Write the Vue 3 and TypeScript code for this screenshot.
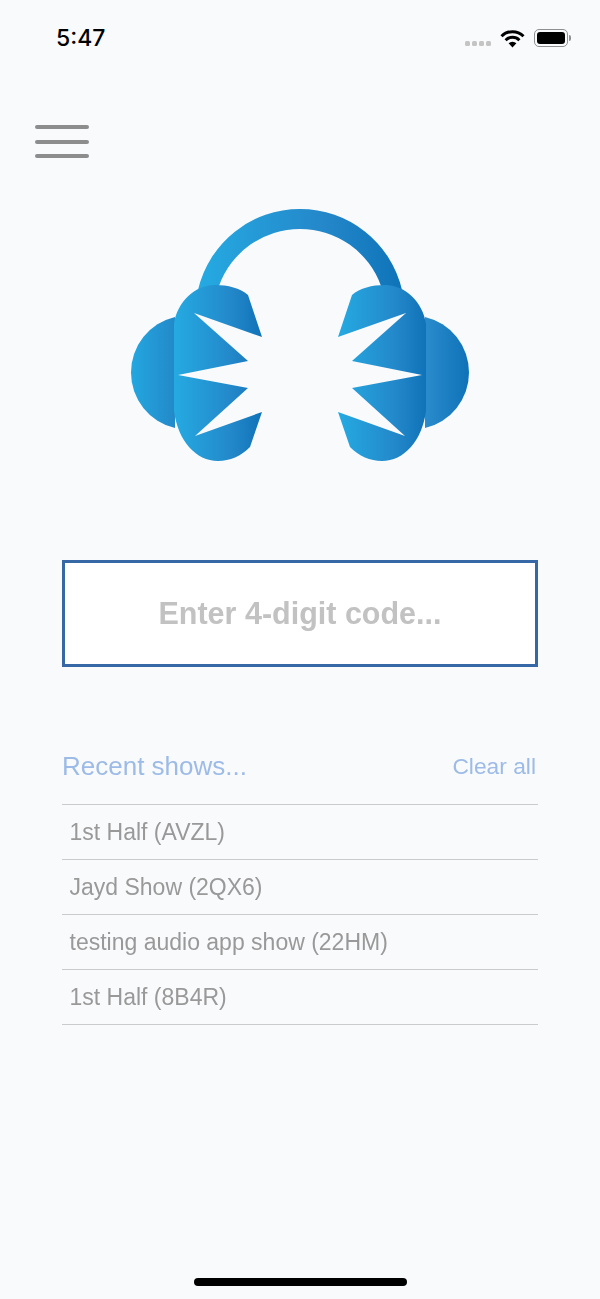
<script setup lang="ts">
const shows: string[] = [
  '1st Half (AVZL)',
  'Jayd Show (2QX6)',
  'testing audio app show (22HM)',
  '1st Half (8B4R)',
]
</script>

<template>
  <div class="screen">
    <div class="status-bar">
      <span class="time">5:47</span>
      <div class="status-icons">
        <div class="signal"><i></i><i></i><i></i><i></i></div>
        <svg class="wifi" width="25" height="19" viewBox="0 0 25 19">
          <path d="M1.5 7.2a15.6 15.6 0 0 1 22 0" fill="none" stroke="#000" stroke-width="3" />
          <path d="M5.6 11.2a9.8 9.8 0 0 1 13.8 0" fill="none" stroke="#000" stroke-width="3" />
          <path d="M8.6 14.3L12.5 18.4L16.4 14.3a5.5 5.5 0 0 0-7.8 0z" fill="#000" />
        </svg>
        <div class="battery"><div class="battery-fill"></div></div>
        <div class="battery-cap"></div>
      </div>
    </div>

    <button class="menu">
      <span></span>
      <span></span>
      <span></span>
    </button>

    <svg class="logo" width="340" height="254" viewBox="130 209 340 254">
      <defs>
        <linearGradient id="band" x1="0" y1="0" x2="1" y2="0">
          <stop offset="0" stop-color="#25aae2" />
          <stop offset="0.6" stop-color="#2488ca" />
          <stop offset="1" stop-color="#0f73b9" />
        </linearGradient>
        <linearGradient id="cup" x1="0" y1="0" x2="1" y2="0">
          <stop offset="0" stop-color="#25aae2" />
          <stop offset="0.65" stop-color="#2388ca" />
          <stop offset="1" stop-color="#1072b8" />
        </linearGradient>
        <linearGradient id="earL" x1="0" y1="0" x2="1" y2="0">
          <stop offset="0" stop-color="#23a7e0" />
          <stop offset="1" stop-color="#2389c9" />
        </linearGradient>
        <linearGradient id="earR" x1="0" y1="0" x2="1" y2="0">
          <stop offset="0" stop-color="#2a8ccc" />
          <stop offset="1" stop-color="#0f72b8" />
        </linearGradient>
      </defs>
      <path d="M198 291A104.7 104.7 0 0 1 402 291L381 287A86 86 0 0 0 219 287Z" fill="url(#band)" />
      <path d="M175 318A57 57 0 0 0 175 429Z" fill="url(#earL)" />
      <path d="M425 318A57 57 0 0 1 425 429Z" fill="url(#earR)" />
      <path
        d="M174 325C177 303 195 286 215 286C228 286 240 289 248 296L262 338L194 314L248 362L178 376L248 389L195 437L262 413L250 448C241 457 230 462 218 462C196 462 178 442 174 412Z"
        fill="url(#cup)"
      />
      <path
        d="M426 325C423 303 405 286 385 286C372 286 360 289 352 296L338 338L406 314L352 362L422 376L352 389L405 437L338 413L350 448C359 457 370 462 382 462C404 462 422 442 426 412Z"
        fill="url(#cup)"
      />
    </svg>

    <div class="main">
      <div class="code-box">Enter 4-digit code...</div>

      <div class="recent-head">
        <span class="recent-title">Recent shows...</span>
        <span class="clear">Clear all</span>
      </div>

      <ul class="show-list">
        <li v-for="(show, i) in shows" :key="i">{{ show }}</li>
      </ul>
    </div>

    <div class="home-indicator"></div>
  </div>
</template>

<style>
body {
  background: #f9fafc;
}
</style>

<style scoped>
.screen {
  height: 1299px;
  display: flex;
  flex-direction: column;
  background: #f9fafc;
  font-family: "Liberation Sans", Arial, sans-serif;
  overflow: hidden;
}

.status-bar {
  height: 76px;
  padding: 0 29px 0 56px;
  display: flex;
  justify-content: space-between;
  align-items: center;
}

.time {
  font-family: Inter, "Liberation Sans", sans-serif;
  font-size: 23px;
  font-weight: 500;
  color: #000;
}

.status-icons {
  display: flex;
  align-items: center;
}

.signal {
  display: flex;
  gap: 2px;
  margin: 11px 9px 0 0;
}

.signal i {
  width: 5px;
  height: 5px;
  border-radius: 1.500px;
  background: #c4c4c4;
}

.battery {
  width: 34px;
  height: 18px;
  margin-left: 9px;
  padding: 2px;
  border: 1px solid #8f8f8f;
  border-radius: 5px;
  box-sizing: border-box;
}

.battery-fill {
  height: 100%;
  background: #000;
  border-radius: 3px;
}

.battery-cap {
  width: 2px;
  height: 6px;
  margin-left: 1px;
  background: #8f8f8f;
  border-radius: 0 2px 2px 0;
}

.menu {
  width: 54px;
  margin: 49px 0 0 35px;
  padding: 0;
  border: none;
  background: none;
  display: flex;
  flex-direction: column;
  gap: 10.500px;
}

.menu span {
  height: 4px;
  border-radius: 2px;
  background: #8d8d8d;
}

.logo {
  display: block;
  margin: 50px 0 0 130px;
}

.main {
  margin: 98px 62px 0;
  will-change: transform;
}

.code-box {
  height: 107px;
  box-sizing: border-box;
  border: 3px solid #3568a5;
  background: #fff;
  display: flex;
  align-items: center;
  justify-content: center;
  font-size: 30.500px;
  font-weight: 700;
  color: #c2c2c2;
}

.recent-head {
  margin-top: 83px;
  height: 54px;
  padding-right: 2px;
  display: flex;
  justify-content: space-between;
  align-items: flex-start;
  color: #9dbbe7;
}

.recent-title {
  font-size: 26px;
  line-height: 32px;
}

.clear {
  font-size: 22.800px;
  line-height: 32px;
}

.show-list {
  list-style: none;
  margin: 0;
  padding: 0;
  border-top: 1px solid #cbcbcb;
}

.show-list li {
  height: 55px;
  box-sizing: border-box;
  padding-left: 7.500px;
  border-bottom: 1px solid #cbcbcb;
  font-size: 23px;
  line-height: 54px;
  color: #999;
}

.home-indicator {
  width: 213px;
  height: 8px;
  margin: auto auto 13px;
  border-radius: 4px;
  background: #000;
}
</style>
